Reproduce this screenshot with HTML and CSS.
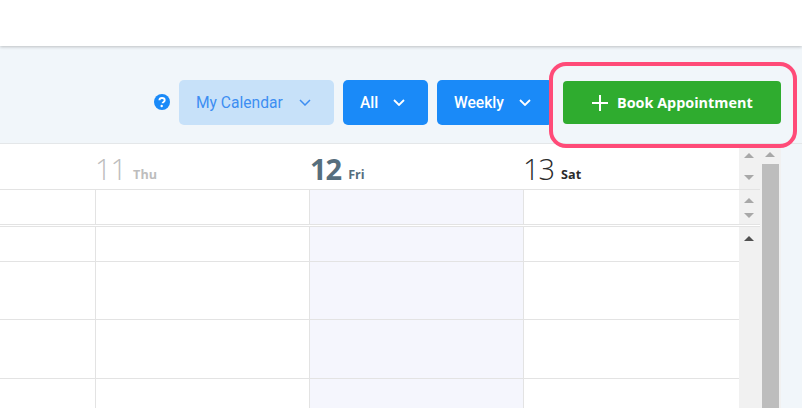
FILE: index.html
```html
<!DOCTYPE html>
<html lang="en">
<head>
<meta charset="utf-8">
<title>Calendar</title>
<link rel="stylesheet" href="styles.css">
</head>
<body>
<header class="topbar"></header>
<section class="toolbar">
  <svg class="help" viewBox="0 0 16 16" width="16" height="16" aria-hidden="true">
    <circle cx="8" cy="8" r="8" fill="#1a8af8"/>
    <path d="M5.4 6.2C5.5 4.8 6.6 4 8 4c1.5 0 2.7.9 2.7 2.2 0 1.1-.7 1.6-1.4 2-.5.3-.7.5-.7 1.1" fill="none" stroke="#fff" stroke-width="1.9"/>
    <circle cx="7.7" cy="12" r="1.2" fill="#fff"/>
  </svg>
  <button class="btn btn-soft btn-cal">My Calendar
    <svg class="chev" viewBox="0 0 12 7" width="12" height="7"><path d="M1 1l5 5 5-5" fill="none" stroke="currentColor" stroke-width="1.5"/></svg>
  </button>
  <button class="btn btn-blue btn-all">All
    <svg class="chev" viewBox="0 0 12 7" width="12" height="7"><path d="M1 1l5 5 5-5" fill="none" stroke="currentColor" stroke-width="1.8"/></svg>
  </button>
  <button class="btn btn-blue btn-week">Weekly
    <svg class="chev" viewBox="0 0 12 7" width="12" height="7"><path d="M1 1l5 5 5-5" fill="none" stroke="currentColor" stroke-width="1.8"/></svg>
  </button>
  <button class="btn btn-book">
    <svg class="plus" viewBox="0 0 16 16" width="16" height="16"><path d="M8 0v16M0 8h16" fill="none" stroke="currentColor" stroke-width="2"/></svg>
    Book Appointment
  </button>
  <div class="highlight"></div>
</section>
<section class="calendar">
  <div class="grid-area">
    <div class="row row-head">
      <div class="cell"></div>
      <div class="cell day past"><span class="num">11</span><span class="name">Thu</span></div>
      <div class="cell day today"><span class="num">12</span><span class="name">Fri</span></div>
      <div class="cell day future"><span class="num">13</span><span class="name">Sat</span></div>
    </div>
    <div class="row row-allday">
      <div class="cell"></div><div class="cell bl"></div><div class="cell bl tint"></div><div class="cell bl"></div>
    </div>
    <div class="row row-s1">
      <div class="cell"></div><div class="cell bl"></div><div class="cell bl tint"></div><div class="cell bl"></div>
    </div>
    <div class="row row-s2">
      <div class="cell"></div><div class="cell bl"></div><div class="cell bl tint"></div><div class="cell bl"></div>
    </div>
    <div class="row row-s3">
      <div class="cell"></div><div class="cell bl"></div><div class="cell bl tint"></div><div class="cell bl"></div>
    </div>
    <div class="row row-s4">
      <div class="cell"></div><div class="cell bl"></div><div class="cell bl tint"></div><div class="cell bl"></div>
    </div>
  </div>
  <div class="scroll-inner">
    <div class="arrows arrows-head"><i class="up"></i><i class="down"></i></div>
    <div class="arrows arrows-allday"><i class="up"></i><i class="down"></i></div>
    <div class="split"></div>
    <div class="arrows arrows-body"><i class="up dark"></i></div>
  </div>
  <div class="scroll-outer">
    <div class="outer-cap"><i class="up"></i></div>
    <div class="thumb"></div>
  </div>
</section>
</body>
</html>
```

FILE: styles.css
```css
* { box-sizing: border-box; }
html, body { margin: 0; padding: 0; width: 802px; height: 408px; overflow: hidden; background: #f1f6fa; }
body { display: flex; flex-direction: column; font-family: Roboto, sans-serif; }

.topbar { height: 46px; flex: none; background: #fff; box-shadow: 0 1px 3px rgba(0,0,0,.22); position: relative; }

.toolbar { height: 98px; flex: none; position: relative; display: flex; align-items: flex-start; padding-top: 34px; padding-left: 154px; border-bottom: 1px solid #e4e7e9; }
.help { margin: 14px 9px 0 0; flex: none; }
.btn { border: 0; height: 45px; border-radius: 5px; font: 400 15.6px Roboto, sans-serif; display: flex; align-items: center; padding: 0 0 0 17px; margin: 0; flex: none; }
.btn-soft { background: #c7e1f9; color: #3d8ef2; }
.btn-blue { background: #1a8af8; color: #fff; font-weight: 500; }
.btn-cal { width: 155px; margin-right: 9px; }
.btn-all { width: 85px; margin-right: 9px; }
.btn-week { width: 116px; margin-right: 10px; }
.chev { margin-left: 15px; }
.btn-cal .chev { margin-left: 16px; }
.btn-book { width: 218px; height: 43px; margin-top: 1px; background: #2fac2f; color: #fff; font: 700 14.4px "Open Sans", sans-serif; padding-left: 29px; border-radius: 4px; white-space: nowrap; }
.plus { margin-right: 9px; flex: none; }
.highlight { position: absolute; left: 549px; top: 16px; width: 248px; height: 86px; border: 4px solid #ff4b78; border-radius: 17px; z-index: 3; }

.calendar { flex: 1; display: flex; min-height: 0; overflow: hidden; }
.grid-area { width: 739px; flex: none; background: #fff; display: flex; flex-direction: column; }
.row { display: grid; grid-template-columns: 95px 214px 214px 216px; flex: none; border-bottom: 1px solid #e3e3e3; }
.row-head { height: 46px; }
.row-allday { height: 35px; }
.row-s1 { height: 36px; margin-top: 1px; border-top: 1px solid #e3e3e3; }
.row-s2 { height: 58px; }
.row-s3 { height: 59px; }
.row-s4 { height: 30px; border-bottom: 0; }
.bl { border-left: 1px solid #e3e3e3; }
.tint { background: #f5f6fd; }

.day { display: flex; align-items: flex-end; padding-bottom: 3px; font-family: "Open Sans", sans-serif; }
.num { font-size: 29px; line-height: 36px; font-weight: 300; letter-spacing: -1px; margin-bottom: -1px; }
.name { font-size: 12.6px; line-height: 18px; font-weight: 700; margin-left: 7px; padding-bottom: 2px; }
.past { color: #bdbdbd; }
.today { color: #566e7d; padding-left: 1px; }
.today .num { font-weight: 700; }
.future { color: #2b2b2b; }

.scroll-inner { width: 23px; flex: none; background: #f1f1f1; }
.scroll-outer { width: 19px; flex: none; background: #f1f1f1; display: flex; flex-direction: column; }
.outer-cap { height: 20px; padding: 8px 0 0 3px; }
.thumb { flex: 1; width: 17px; background: #bdbdbd; }

.arrows { display: flex; flex-direction: column; align-items: center; width: 21px; padding-right: 1px; }
.arrows-head { height: 46px; padding-top: 9px; gap: 17px; border-bottom: 1px solid #e3e3e3; }
.arrows-allday { height: 35px; padding-top: 8px; gap: 10px; border-bottom: 1px solid #e3e3e3; }
.split { width: 21px; height: 2px; background: #fff; border-bottom: 1px solid #e3e3e3; }
.arrows-body { padding-top: 9px; }
i { display: block; width: 0; height: 0; border-left: 5px solid transparent; border-right: 5px solid transparent; }
.up { border-bottom: 5px solid #a8a8a8; }
.down { border-top: 5px solid #a8a8a8; }
.up.dark { border-bottom-color: #505050; }
```
